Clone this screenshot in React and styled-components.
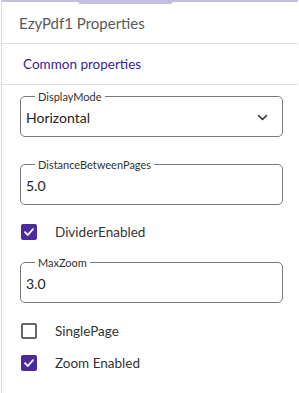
import React from 'react'
import styled, { createGlobalStyle } from 'styled-components'

const Global = createGlobalStyle`
  html, body { margin: 0; padding: 0; background: #fff; }
  body { font-family: Lato, "Noto Sans", sans-serif; }
`

const Panel = styled.div`
  width: 299px;
  height: 393px;
  box-sizing: border-box;
  border-left: 1px solid #dcdcdc;
  margin-left: 1px;
  position: relative;
  overflow: hidden;
`

const TopLine = styled.div`
  height: 2px;
  width: 296px;
  background: #c5bde2;
  display: flex;
  justify-content: center;
`

const TopThumb = styled.div`
  width: 95px;
  height: 4px;
  margin-left: -50px;
  background: #c5bde2;
  border-radius: 0 0 3px 3px;
`

const Header = styled.div`
  height: 42px;
  display: flex;
  align-items: center;
  padding-left: 17px;
  border-bottom: 1px solid #dedede;
  width: 296px;
  box-sizing: border-box;
  font-size: 15px;
  color: #5a5a5a;
`

const Section = styled.div`
  height: 41px;
  display: flex;
  align-items: center;
  padding-left: 21px;
  border-bottom: 1px solid #dedede;
  width: 296px;
  box-sizing: border-box;
  font-size: 13.5px;
  color: #3a239b;
`

const Body = styled.div`
  display: flex;
  flex-direction: column;
  padding: 5px 17px 0 18px;
`

const Field = styled.fieldset`
  margin: ${({ mt }) => mt || 0}px 0 0 0;
  padding: 0 14px 0 5px;
  border: 1px solid #7a7a7a;
  border-radius: 5px;
  min-width: 0;
`

const Legend = styled.legend`
  font-size: 11px;
  line-height: 13px;
  color: #333;
  padding: 0 3px;
  margin-left: 9px;
`

const Value = styled.div`
  height: 28px;
  padding-bottom: 5px;
  display: flex;
  align-items: center;
  justify-content: space-between;
  font-size: 14px;
  color: #222;
`

const CheckRow = styled.label`
  margin-top: ${({ mt }) => mt || 0}px;
  height: 24px;
  display: flex;
  align-items: center;
  padding-left: 1px;
  gap: 18px;
  font-size: 13.5px;
  color: #333;
`

const Box = styled.span`
  width: 16px;
  height: 16px;
  box-sizing: border-box;
  border-radius: 2px;
  display: flex;
  align-items: center;
  justify-content: center;
  background: ${({ checked }) => (checked ? '#4a2a9e' : '#fff')};
  border: ${({ checked }) => (checked ? 'none' : '2px solid #666')};
`

const Chevron = () => (
  <svg width="11" height="7" viewBox="0 0 11 7">
    <polyline points="1.5,1.5 5.5,5.5 9.5,1.5" fill="none" stroke="#333" strokeWidth="1.6" strokeLinecap="round" strokeLinejoin="round" />
  </svg>
)

const Check = ({ checked, label, mt }) => (
  <CheckRow mt={mt}>
    <Box checked={checked}>
      {checked && (
        <svg width="12" height="10" viewBox="0 0 12 10">
          <polyline points="2,5.2 4.8,8 10,2.2" fill="none" stroke="#fff" strokeWidth="1.8" strokeLinecap="round" strokeLinejoin="round" />
        </svg>
      )}
    </Box>
    {label}
  </CheckRow>
)

const App = () => {
  return (
    <Panel>
      <Global />
      <TopLine>
        <TopThumb />
      </TopLine>
      <Header>EzyPdf1 Properties</Header>
      <Section>Common properties</Section>
      <Body>
        <Field>
          <Legend>DisplayMode</Legend>
          <Value>
            Horizontal
            <Chevron />
          </Value>
        </Field>
        <Field mt={21}>
          <Legend>DistanceBetweenPages</Legend>
          <Value>5.0</Value>
        </Field>
        <Check checked label="DividerEnabled" mt={15} />
        <Field mt={12}>
          <Legend>MaxZoom</Legend>
          <Value>3.0</Value>
        </Field>
        <Check label="SinglePage" mt={16} />
        <Check checked label="Zoom Enabled" mt={8} />
      </Body>
    </Panel>
  )
}

export default App
